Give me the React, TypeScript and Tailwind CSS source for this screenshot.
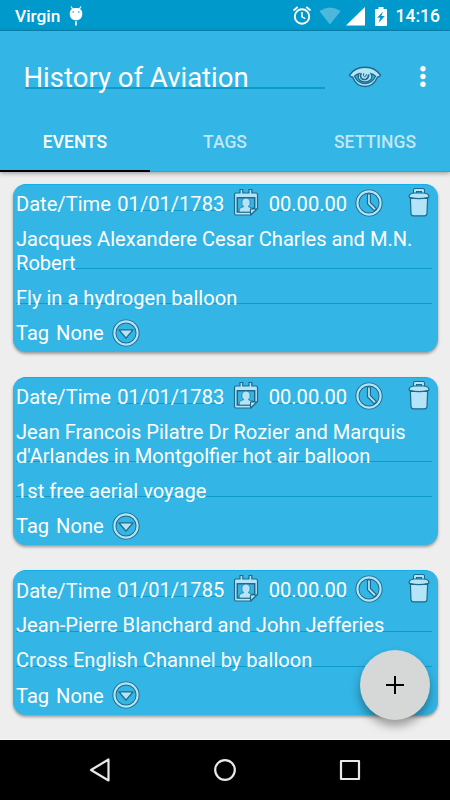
import React from "react";

const INK = "#1d6a8c";
const ICE = "#b4e4f7";

function CalendarIcon() {
  return (
    <svg width="26" height="30" viewBox="0 0 26 30" className="block shrink-0">
      <path
        d="M1.5 6.5Q1.5 5 3 5H7V1.5H9.8V5H16V1.5H18.8V5H23Q24.5 5 24.5 6.5V20.5L18 27H3Q1.5 27 1.5 25.5Z"
        fill={ICE}
        stroke={INK}
        strokeWidth="1.2"
      />
      <path d="M4.3 9.8H21.7V20.5H17V24H4.3Z" fill="#33b5e5" stroke={INK} strokeWidth="1.5" />
      <path
        d="M6.3 24V21Q8 19 10.7 18.7Q8.3 17 8.9 13.2Q9.5 10 13 10T17.1 13.2Q17.6 17 15.4 18.7L18.8 20.3L17 24Z"
        fill={ICE}
        stroke={INK}
        strokeWidth="0.7"
      />
      <path d="M17.5 26.8V21H23.8Z" fill={ICE} stroke={INK} strokeWidth="1.1" strokeLinejoin="round" />
    </svg>
  );
}

function ClockIcon() {
  return (
    <svg width="28" height="28" viewBox="0 0 28 28" className="block shrink-0">
      <circle cx="14" cy="14" r="11.6" fill="none" stroke={INK} strokeWidth="4" />
      <circle cx="14" cy="14" r="11.6" fill="none" stroke={ICE} strokeWidth="2.1" />
      <path d="M12.5 5H15.4V13.5L21.4 19.6L19.4 21.9L12.5 15Z" fill={ICE} stroke={INK} strokeWidth="1.2" />
    </svg>
  );
}

function TrashIcon() {
  return (
    <svg width="24" height="32" viewBox="0 0 24 32" className="block">
      <path d="M8 7V3H16V7" fill="none" stroke={INK} strokeWidth="4" strokeLinejoin="round" />
      <path d="M8 7V3H16V7" fill="none" stroke={ICE} strokeWidth="1.9" strokeLinejoin="round" />
      <path d="M3.4 11.5H20.6L20 26.5Q19.8 28.8 17.5 28.8H6.5Q4.2 28.8 4 26.5Z" fill={ICE} stroke={INK} strokeWidth="1.2" />
      <path
        d="M2 9.2Q3 6 7.5 6H16.5Q21 6 22 9.2Q22 10.5 20.5 10.6Q12 12.8 3.5 10.6Q2 10.5 2 9.2Z"
        fill={ICE}
        stroke={INK}
        strokeWidth="1.2"
      />
    </svg>
  );
}

function DropIcon() {
  return (
    <svg width="28" height="28" viewBox="0 0 28 28" className="block shrink-0">
      <circle cx="14" cy="14" r="11.6" fill="none" stroke={INK} strokeWidth="4" />
      <circle cx="14" cy="14" r="11.6" fill="none" stroke={ICE} strokeWidth="2.1" />
      <path d="M7 10.8H21L14 19.2Z" fill={ICE} stroke={INK} strokeWidth="1.3" strokeLinejoin="round" />
    </svg>
  );
}

function EyeIcon() {
  return (
    <svg width="34" height="22" viewBox="0 0 34 22" className="block">
      <path
        d="M1.5 9.2Q6.5 1.2 17 1.2T32.5 9.2Q32 10.8 29.5 11Q25.5 20.5 17 20.5T4.5 11Q2 10.8 1.5 9.2Z"
        fill={ICE}
        stroke={INK}
        strokeWidth="1.4"
        strokeLinejoin="round"
      />
      <path
        d="M6.5 10.2Q8.5 8.2 11 7.6Q9.6 10 10.4 12.3Q12 15.8 17 15.8T23.6 12.3Q24.4 10 23 7.6Q25.5 8.2 27.5 10.2Q24 17.6 17 17.6T6.5 10.2Z"
        fill="#33b5e5"
        stroke={INK}
        strokeWidth="1.3"
      />
      <path
        d="M13.3 7.2Q11.8 9.8 13.2 12Q15 14.2 18 13.2Q20.8 11.8 20.6 8.4"
        fill="none"
        stroke={INK}
        strokeWidth="1.7"
      />
      <path d="M15.8 7.2Q14.6 10.6 16.8 10.8Q18 10.6 18.6 8.2" fill="none" stroke={INK} strokeWidth="1" />
    </svg>
  );
}

function StatusBar() {
  return (
    <div className="flex h-[31px] shrink-0 items-center border-b border-[#0587b6] bg-[#0099cc] pl-[15px] pr-[10px] pt-[2px] text-white">
      <span className="text-[17.3px] font-medium leading-[20px]">Virgin</span>
      <svg width="14" height="22" viewBox="0 0 14 22" className="ml-[8.5px]" fill="white">
        <path d="M2 1.5L4 4.5M12 1.5L10 4.5" stroke="white" strokeWidth="1.3" />
        <path d="M7 3C11 3 13.3 5 13.3 8.5C13.3 12.5 11 15.3 7 15.3S.7 12.5.7 8.5C.7 5 3 3 7 3Z" />
        <path d="M6.2 16.2H7.8V20.5H6.2Z" />
        <circle cx="4.2" cy="7" r=".8" fill="#0099cc" />
        <circle cx="9.8" cy="7" r=".8" fill="#0099cc" />
      </svg>
      <div className="ml-auto flex items-center">
        <svg width="20" height="20" viewBox="0 0 20 20" fill="none" stroke="white">
          <circle cx="10" cy="10.5" r="7.2" strokeWidth="1.9" />
          <path d="M10 6V10.8L13.3 12.7" strokeWidth="1.5" />
          <path d="M1.5 4.5L5.7 1M18.5 4.5L14.3 1" strokeWidth="1.8" />
        </svg>
        <svg width="22" height="18" viewBox="0 0 22 18" className="ml-[7px]">
          <path d="M.3 4Q11-3 21.7 4L11 17.5Z" fill="#4db8dc" />
        </svg>
        <svg width="19" height="19" viewBox="0 0 19 19" className="ml-[5px]">
          <path d="M0 18.5L19 0V18.5Z" fill="white" />
        </svg>
        <svg width="12" height="19" viewBox="0 0 12 19" className="ml-[10px]">
          <path d="M3.5 0H8.5V2H11Q12 2 12 3V18Q12 19 11 19H1Q0 19 0 18V3Q0 2 1 2H3.5Z" fill="white" />
          <path d="M8 4.5L2.2 10.8H5.2L3.6 16L9.8 9H6.4Z" fill="#0099cc" />
        </svg>
        <span className="ml-[9px] text-[17.5px] font-medium leading-[20px]">14:16</span>
      </div>
    </div>
  );
}

function Field({ children, className = "" }: { children: React.ReactNode; className?: string }) {
  return (
    <div className={`relative pb-[5.1px] pt-[6.6px] ${className}`}>
      <span className="absolute inset-x-0 bottom-[11px] h-px bg-[#0d9bce]" />
      <span className="relative whitespace-pre-line">{children}</span>
    </div>
  );
}

type EventItem = { date: string; title: string; note: string };

const EVENTS: EventItem[] = [
  { date: "01/01/1783", title: "Jacques Alexandere Cesar Charles and M.N.\nRobert", note: "Fly in a hydrogen balloon" },
  { date: "01/01/1783", title: "Jean Francois Pilatre Dr Rozier and Marquis\nd'Arlandes in Montgolfier hot air balloon", note: "1st free aerial voyage" },
  { date: "01/01/1785", title: "Jean-Pierre Blanchard and John Jefferies", note: "Cross English Channel by balloon" },
];

function EventCard({ date, title, note }: EventItem) {
  return (
    <div className="rounded-[13px] border-t border-[#12afe8] bg-[#33b5e5] pb-[2px] pl-[3px] pr-[6px] pt-[1.5px] text-[20.1px] leading-[23.4px] text-white shadow-[0_2px_3px_rgba(0,0,0,0.35)]">
      <div className="flex h-[35.1px] items-center">
        <span className="pt-[2px]">Date/Time</span>
        <Field className="ml-[6.5px]">{date}</Field>
        <div className="-mt-[2px] ml-[8.5px]"><CalendarIcon /></div>
        <Field className="ml-[10px]">00.00.00</Field>
        <div className="-mt-[2px] ml-[7.5px]"><ClockIcon /></div>
        <div className="-mt-[3px] ml-auto mr-[1px]"><TrashIcon /></div>
      </div>
      <Field>{title}</Field>
      <Field>{note}</Field>
      <div className="flex h-[35.1px] items-center">
        <span className="pt-[1.5px]">Tag</span>
        <span className="ml-[7px] pt-[1.5px]">None</span>
        <div className="ml-[8.5px]"><DropIcon /></div>
      </div>
    </div>
  );
}

export default function App() {
  return (
    <div className="relative flex h-[800px] w-[450px] flex-col overflow-hidden bg-[#eeeeee] font-['Roboto',sans-serif]">
      <StatusBar />
      <header className="z-10 flex h-[140px] shrink-0 flex-col bg-[#33b5e5] text-white shadow-[0_2px_5px_rgba(0,0,0,0.4)]">
        <div className="flex h-[83px] items-center pt-[9px]">
          <div className="relative ml-[25px] w-[300px] pt-[2px] text-[27.5px] leading-[32px]">
            <span className="absolute inset-x-0 bottom-[5px] h-[2px] bg-[#0d9bce]" />
            <span className="relative -ml-[1.5px] whitespace-nowrap">History of Aviation</span>
          </div>
          <div className="ml-[23px]"><EyeIcon /></div>
          <svg width="6" height="22" viewBox="0 0 6 22" className="ml-[37.5px]" fill="white">
            <circle cx="3" cy="2.8" r="2.7" />
            <circle cx="3" cy="10.5" r="2.7" />
            <circle cx="3" cy="18.2" r="2.7" />
          </svg>
        </div>
        <nav className="grid h-[57px] grid-cols-3 text-center text-[17.5px] font-medium leading-[56px]">
          <div className="border-b-2 border-black">EVENTS</div>
          <div className="border-b border-[#12afe8] text-white/70">TAGS</div>
          <div className="border-b border-[#12afe8] text-white/70">SETTINGS</div>
        </nav>
      </header>
      <main className="flex min-h-0 flex-1 flex-col gap-[24.8px] border-b border-[#f8f8f8] pl-[13px] pr-[12px] pt-[13px]">
        {EVENTS.map((e) => (
          <EventCard key={e.title} {...e} />
        ))}
      </main>
      <button className="absolute left-[360px] top-[650px] flex size-[70px] items-center justify-center rounded-full bg-[#d6d7d7] shadow-[0_6px_10px_rgba(0,0,0,0.35)]">
        <svg width="18" height="18" viewBox="0 0 18 18">
          <path d="M9 0V18M0 9H18" stroke="black" strokeWidth="2" />
        </svg>
      </button>
      <footer className="z-10 flex h-[60px] shrink-0 items-center bg-black pl-[89px]">
        <svg width="22" height="26" viewBox="0 0 22 26" fill="none" stroke="#e8e8e8" strokeWidth="2.2" strokeLinejoin="round">
          <path d="M19.5 2.5V23.5L2 13Z" />
        </svg>
        <svg width="24" height="24" viewBox="0 0 24 24" className="ml-[102px]" fill="none" stroke="#e8e8e8" strokeWidth="2.2">
          <circle cx="12" cy="12" r="9.8" />
        </svg>
        <svg width="22" height="22" viewBox="0 0 22 22" className="ml-[102px]" fill="none" stroke="#e8e8e8" strokeWidth="2.2" strokeLinejoin="round">
          <rect x="2" y="2" width="18" height="18" />
        </svg>
      </footer>
    </div>
  );
}
